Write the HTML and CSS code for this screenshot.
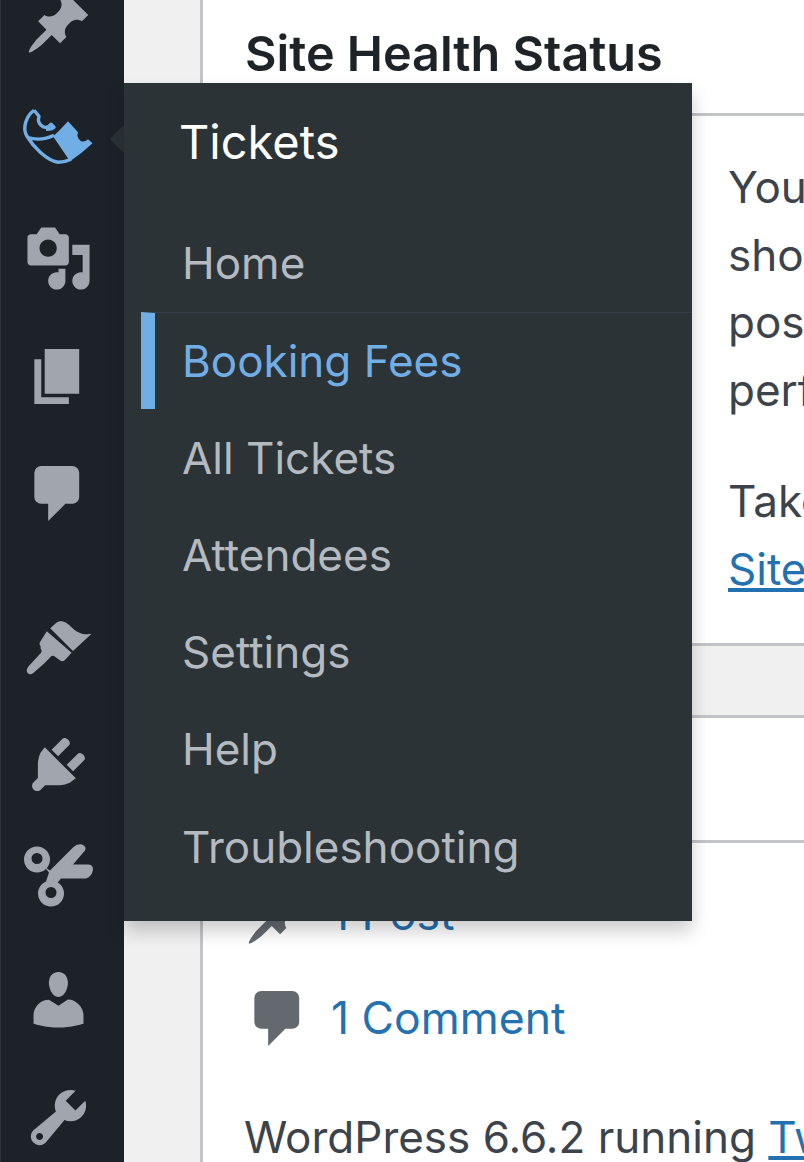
FILE: index.html
```html
<!DOCTYPE html>
<html lang="en">
<head>
  <meta charset="UTF-8">
  <meta name="viewport" content="width=device-width, initial-scale=1.0">
  <title>Dashboard</title>
  <link rel="stylesheet" href="styles.css">
</head>
<body>
  <nav class="sidebar">
    <ul class="menu">
      <li class="menu-item">
        <svg class="icon" viewBox="0 0 20 20"><path d="M10.44 3.02l1.82-1.82 6.36 6.35-1.83 1.82c-1.05-.68-2.48-.57-3.41.36l-.75.75c-.92.93-1.04 2.35-.35 3.41l-1.83 1.82-2.41-2.41-2.8 2.79c-.42.42-3.38 2.71-3.8 2.29s1.86-3.39 2.28-3.81l2.79-2.79L4.1 9.36l1.83-1.82c1.05.69 2.48.57 3.4-.36l.75-.75c.93-.92 1.05-2.35.36-3.41z"/></svg>
      </li>
      <li class="menu-item">
        <svg class="icon icon-tickets" viewBox="24 106.750 69 69">
          <path class="ticket-fill" d="M53 136Q58 132 68 121L78 132Q76 137 81 141 85 142 88 139L92.500 143Q82 153 70 161Z"/>
          <path class="ticket-line" d="M34 110C26 116 22 128 27 136 33 146 46 160 58 162 63 162 67 161 71 159M27 137C36 140 46 139 54 135M34 110L39 116C38 120 38 122 41 125 44 128 48 128 51 124L54 127C52 129 49 129 46 129"/>
        </svg>
        <span class="arrow"></span>
        <div class="flyout">
          <div class="flyout-title">Tickets</div>
          <a class="flyout-link" href="#">Home</a>
          <a class="flyout-link current" href="#">Booking Fees</a>
          <a class="flyout-link" href="#">All Tickets</a>
          <a class="flyout-link" href="#">Attendees</a>
          <a class="flyout-link" href="#">Settings</a>
          <a class="flyout-link" href="#">Help</a>
          <a class="flyout-link" href="#">Troubleshooting</a>
        </div>
      </li>
      <li class="menu-item">
        <svg class="icon" viewBox="0 0 20 20"><path d="M13 11V4c0-.55-.45-1-1-1h-1.67L9 1H5L3.67 3H2c-.55 0-1 .45-1 1v7c0 .55.45 1 1 1h10c.55 0 1-.45 1-1zM7 4.5c1.38 0 2.5 1.12 2.5 2.5S8.38 9.5 7 9.5 4.5 8.38 4.5 7 5.62 4.5 7 4.5zM14 6h5v10.5c0 1.38-1.12 2.5-2.5 2.5S14 17.88 14 16.5s1.12-2.5 2.5-2.5c.17 0 .34.02.5.05V9h-3V6zm-4 8.05V13h2v3.5c0 1.38-1.12 2.5-2.5 2.5S7 17.88 7 16.5 8.12 14 9.5 14c.17 0 .34.02.5.05z"/></svg>
      </li>
      <li class="menu-item">
        <svg class="icon" viewBox="0 0 20 20"><path d="M6 15V2h10v13H6zm-1 1h8v2H3V5h2v11z"/></svg>
      </li>
      <li class="menu-item">
        <svg class="icon" viewBox="0 0 20 20"><path d="M5 2h9q.82 0 1.41.59T16 4v7q0 .82-.59 1.41T14 13h-2l-5 5v-5H5q-.82 0-1.41-.59T3 11V4q0-.82.59-1.41T5 2z"/></svg>
      </li>
      <li class="menu-item after-separator">
        <svg class="icon" viewBox="0 0 20 20">
          <path d="M7.600 4.400L9.300 2.900c.8-.7 2-.7 3 0 1.200.8 1.700 1.700 3.100 2.500 1.300.7 2.700.9 4.200.6L14.200 11z"/>
          <path d="M6.600 5.300L13.800 11.500 11.800 13.700c-.4.4-1 .4-1.400 0L8.900 12.600c-.4-.3-.9-.2-1.300.2L6 14.500 2.700 17.400c-.8.7-1.900.3-1.900-.7 0-.6.4-1.200 1-1.800l3-3.200c.4-.4.4-1 0-1.400L4.800 9.600c-.4-.4-.4-1 0-1.400z"/>
        </svg>
      </li>
      <li class="menu-item">
        <svg class="icon" viewBox="0 0 20 20"><path d="M13.11 4.36L9.87 7.6 8 5.73l3.24-3.24c.35-.34 1.05-.2 1.56.32.52.51.66 1.21.31 1.55zm-8 1.77l.91-1.12 9.01 9.01-1.19.84c-.71.71-2.63 1.16-3.82 1.16H6.14L4.9 17.26c-.59.59-1.54.59-2.12 0-.59-.58-.59-1.53 0-2.12l1.24-1.24v-3.88c0-1.13.4-3.19 1.09-3.89zm7.26 3.97l3.24-3.24c.34-.35 1.04-.21 1.55.31.52.51.66 1.21.31 1.55l-3.24 3.25z"/></svg>
      </li>
      <li class="menu-item">
        <svg class="icon icon-scissors" viewBox="24 847.500 69 69">
          <path fill-rule="evenodd" d="M37 846a13 13 0 1 1 0 26 13 13 0 0 1 0-26zM37 852.5a5.5 5.5 0 1 0 0 11 5.5 5.5 0 0 0 0-11zM51 880a13 13 0 1 1 0 26 13 13 0 0 1 0-26zM51 886.500a5.500 5.500 0 1 0 0 11 5.500 5.500 0 0 0 0-11z"/>
          <path d="M44 866L50 870 73 847Q77 843 82 844 87 846 85 850L73 864H88Q93 864 93 869 92 876 86 878H61L56 884 46 881 49 872Z"/>
        </svg>
      </li>
      <li class="menu-item">
        <svg class="icon" viewBox="0 0 20 20"><path d="M10 9.25c-2.27 0-2.73-3.44-2.73-3.44C7 4.02 7.82 2 9.97 2c2.16 0 2.98 2.02 2.71 3.81 0 0-.41 3.44-2.68 3.44zm0 2.57L12.72 10c2.39 0 4.52 2.33 4.52 4.53v2.49s-3.65 1.13-7.24 1.13c-3.65 0-7.24-1.13-7.24-1.13v-2.49c0-2.25 1.94-4.48 4.47-4.48z"/></svg>
      </li>
      <li class="menu-item">
        <svg class="icon" viewBox="0 0 20 20"><path d="M16.68 9.770c-1.34 1.34-3.3 1.67-4.95.99l-5.41 6.52c-.99.99-2.59.99-3.58 0s-.99-2.59 0-3.57l6.52-5.42c-.68-1.65-.35-3.61.99-4.95 1.28-1.28 3.12-1.62 4.72-1.06l-2.89 2.89 2.82 2.82 2.86-2.87c.53 1.58.18 3.39-1.08 4.65zM3.81 16.21c.4.39 1.04.39 1.43 0 .4-.4.4-1.04 0-1.43-.39-.4-1.03-.4-1.43 0-.39.39-.39 1.03 0 1.43z"/></svg>
      </li>
    </ul>
  </nav>

  <main class="content">
    <section class="card">
      <h2 class="card-title">Site Health Status</h2>
      <div class="health-body">
        <p>Your site has critical issues that<br>should be addressed as soon as<br>possible to improve its<br>performance and security.</p>
        <p>Take a look at the 5 items on the<br><a href="#">Site Health screen</a>.</p>
      </div>
      <div class="band"></div>
      <div class="empty-row"></div>
      <div class="glance">
        <div class="glance-row">
          <svg class="icon glance-icon" viewBox="0 0 20 20"><path d="M10.44 3.02l1.82-1.82 6.36 6.35-1.83 1.82c-1.05-.68-2.48-.57-3.41.36l-.75.75c-.92.93-1.04 2.35-.35 3.41l-1.83 1.82-2.41-2.41-2.8 2.79c-.42.42-3.38 2.71-3.8 2.29s1.86-3.39 2.28-3.81l2.79-2.79L4.1 9.36l1.83-1.82c1.05.69 2.48.57 3.4-.36l.75-.75c.93-.92 1.05-2.35.36-3.41z"/></svg>
          <a class="glance-link" href="#">1 Post</a>
        </div>
        <div class="glance-row">
          <svg class="icon glance-icon" viewBox="0 0 20 20"><path d="M5 2h9q.82 0 1.41.59T16 4v7q0 .82-.59 1.41T14 13h-2l-5 5v-5H5q-.82 0-1.41-.59T3 11V4q0-.82.59-1.41T5 2z"/></svg>
          <a class="glance-link" href="#">1 Comment</a>
        </div>
        <p class="version">WordPress 6.6.2 running <a href="#">Twenty Twenty-Four</a> theme.</p>
      </div>
    </section>
  </main>
</body>
</html>
```

FILE: styles.css
```css
html, body {
  height: 100%;
  overflow: hidden;
}
body {
  margin: 0;
  display: flex;
  background-color: #f0f0f1;
  color: #3c434a;
  font-family: Inter, "Liberation Sans", sans-serif;
  font-size: 44px;
  line-height: 67.5px;
}
a {
  color: #2271b1;
}
p {
  margin: 0;
  white-space: nowrap;
}

/* sidebar */
.sidebar {
  flex: none;
  width: 124px;
  background-color: #1d2229;
  box-shadow: inset 1px 0 0 #2c3338;
}
.menu {
  list-style: none;
  margin: -35px 0 0;
  padding: 0;
}
.menu-item {
  position: relative;
  display: flex;
  align-items: center;
  height: 117.5px;
  padding-left: 24px;
}
.after-separator {
  margin-top: 35.75px;
}
.icon {
  display: block;
  flex: none;
  width: 69px;
  height: 69px;
  fill: #a0a5ae;
  overflow: visible;
}
.ticket-fill {
  fill: #72aee6;
}
.ticket-line {
  fill: none;
  stroke: #72aee6;
  stroke-width: 3.4;
  stroke-linejoin: round;
}
.arrow {
  position: absolute;
  left: 110px;
  top: 42.500px;
  border-style: solid;
  border-width: 14px 14px 14px 0;
  border-color: transparent #2c3336 transparent transparent;
}

/* flyout submenu */
.flyout {
  position: absolute;
  z-index: 10;
  left: 124px;
  top: 0.5px;
  width: 568px;
  height: 838px;
  background-color: #2c3336;
  box-shadow: 0 10px 17px rgba(0, 0, 0, 0.2);
}
.flyout-title {
  height: 132px;
  padding-left: 55px;
  color: #fff;
  font-size: 47px;
  line-height: 118px;
}
.flyout-link {
  display: block;
  height: 97.3px;
  padding-left: 58px;
  color: #b4bac0;
  line-height: 96.5px;
  text-decoration: none;
}
.flyout-link.current {
  box-sizing: border-box;
  height: 96.3px;
  margin: 0 0 1px 17px;
  padding-left: 27px;
  border-left: 14px solid #72aee6;
  border-top: 1px solid #353f4b;
  color: #72aee6;
}

/* dashboard card */
.content {
  flex: 1;
  min-width: 0;
  padding-left: 76px;
}
.card {
  height: 100%;
  border-left: 3px solid #c3c4c7;
  background-color: #fff;
}
.card-title {
  margin: 0;
  height: 113px;
  padding-left: 42px;
  border-bottom: 3px solid #c3c4c7;
  color: #1d2327;
  font-size: 48.5px;
  font-weight: 600;
  line-height: 107px;
}
.health-body {
  padding: 38px 0 40px 525px;
}
.health-body p + p {
  margin-top: 44px;
}
.band {
  height: 69px;
  border-top: 3px solid #c3c4c7;
  border-bottom: 3px solid #c3c4c7;
  background-color: #f0f0f1;
}
.empty-row {
  height: 122px;
  border-bottom: 3px solid #c3c4c7;
}
.glance {
  display: flex;
  flex-direction: column;
  gap: 35px;
  padding: 37px 0 0 41px;
}
.glance-row {
  display: flex;
  align-items: center;
  gap: 18px;
}
.glance-icon {
  fill: #646970;
}
.glance-link {
  text-decoration: none;
  font-size: 44.5px;
}
.version {
  margin-top: 16px;
}
```
